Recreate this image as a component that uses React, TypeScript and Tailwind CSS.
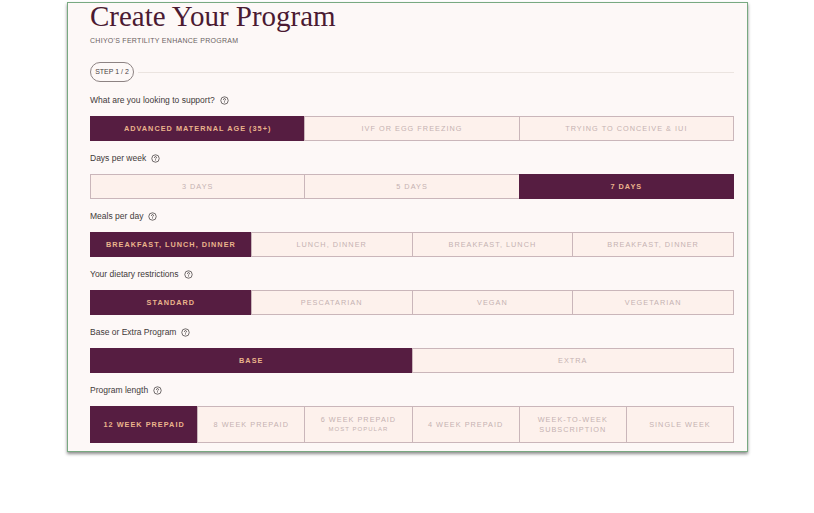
import React, { useState } from 'react';

type Option = { label: string; sub?: string };

interface ISection {
  title: string;
  options: Option[];
  tall?: boolean;
}

const SECTIONS: ISection[] = [
  {
    title: 'What are you looking to support?',
    options: [
      { label: 'Advanced maternal age (35+)' },
      { label: 'IVF or egg freezing' },
      { label: 'Trying to conceive & IUI' },
    ],
  },
  {
    title: 'Days per week',
    options: [{ label: '3 days' }, { label: '5 days' }, { label: '7 days' }],
  },
  {
    title: 'Meals per day',
    options: [
      { label: 'Breakfast, lunch, dinner' },
      { label: 'Lunch, dinner' },
      { label: 'Breakfast, lunch' },
      { label: 'Breakfast, dinner' },
    ],
  },
  {
    title: 'Your dietary restrictions',
    options: [
      { label: 'Standard' },
      { label: 'Pescatarian' },
      { label: 'Vegan' },
      { label: 'Vegetarian' },
    ],
  },
  {
    title: 'Base or Extra Program',
    options: [{ label: 'Base' }, { label: 'Extra' }],
  },
  {
    title: 'Program length',
    tall: true,
    options: [
      { label: '12 week prepaid' },
      { label: '8 week prepaid' },
      { label: '6 week prepaid', sub: 'Most popular' },
      { label: '4 week prepaid' },
      { label: 'Week-to-week subscription' },
      { label: 'Single week' },
    ],
  },
];

const HelpIcon = () => (
  <svg width="9" height="9" viewBox="0 0 16 16" fill="none" className="ml-[5px]">
    <circle cx="8" cy="8" r="6.6" stroke="#3f3a3a" strokeWidth="1.3" />
    <path d="M6.2 6.3a1.8 1.8 0 1 1 2.6 1.6c-.5.3-.8.6-.8 1.2v.4" stroke="#3f3a3a" strokeWidth="1.3" strokeLinecap="round" />
    <circle cx="8" cy="11.3" r="0.8" fill="#3f3a3a" />
  </svg>
);

const App: React.FC = () => {
  const [selected, setSelected] = useState<number[]>([0, 2, 0, 0, 0, 0]);

  const pick = (section: number, index: number) => {
    setSelected(current => current.map((v, i) => (i === section ? index : v)));
  };

  return (
    <div className="w-[814px] h-[513px] bg-white pl-[67px] pt-[2px] font-['Liberation_Sans',sans-serif]">
      <div className="w-[681px] h-[450px] overflow-hidden border border-[#78a981] bg-[#fdf8f7] pl-[22px] pr-[13px] shadow-[0_2px_3px_rgba(0,0,0,0.45)]">
        <h1 className="mt-[-4px] text-[29px] leading-[34px] text-[#4b1a32] font-['Liberation_Serif',serif]">
          Create Your Program
        </h1>
        <div className="mt-[3px] text-[7px] leading-[10px] tracking-[0.04em] text-[#6b6262] uppercase">
          Chiyo's Fertility Enhance Program
        </div>
        <div className="mt-[16px] flex items-center">
          <div className="h-[20px] w-[44px] rounded-full border border-[#8d8383] flex items-center justify-center text-[7px] text-[#4a4343]">
            STEP 1 / 2
          </div>
          <div className="ml-[4px] flex-1 h-px bg-[#ebe4e0]" />
        </div>
        {SECTIONS.map((section, s) => (
          <div key={s} className={s === 0 ? 'mt-[13px]' : 'mt-[12px]'}>
            <div className="flex items-center h-[11px] text-[8.5px] text-[#3f3a3a]">
              {section.title}
              <HelpIcon />
            </div>
            <div className="mt-[10px] flex">
              {section.options.map((option, i) => {
                const active = selected[s] === i;
                return (
                  <button
                    type="button"
                    key={i}
                    onClick={() => pick(s, i)}
                    className={`flex-1 flex flex-col items-center justify-center uppercase tracking-[0.14em] text-[7.3px] leading-[10px] border ${
                      section.tall ? 'h-[37px]' : 'h-[25px]'
                    } ${i > 0 ? '-ml-px' : ''} ${
                      active
                        ? 'bg-[#561d41] border-[#561d41] text-[#eab48c] font-bold'
                        : 'bg-[#fdf1ec] border-[#cab6ba] text-[#c5b1b2]'
                    }`}
                  >
                    <span className={option.label.length > 18 && section.tall ? 'max-w-[80px]' : ''}>{option.label}</span>
                    {option.sub && <span className="text-[6px] leading-[9px]">{option.sub}</span>}
                  </button>
                );
              })}
            </div>
          </div>
        ))}
      </div>
    </div>
  );
};

export default App;
